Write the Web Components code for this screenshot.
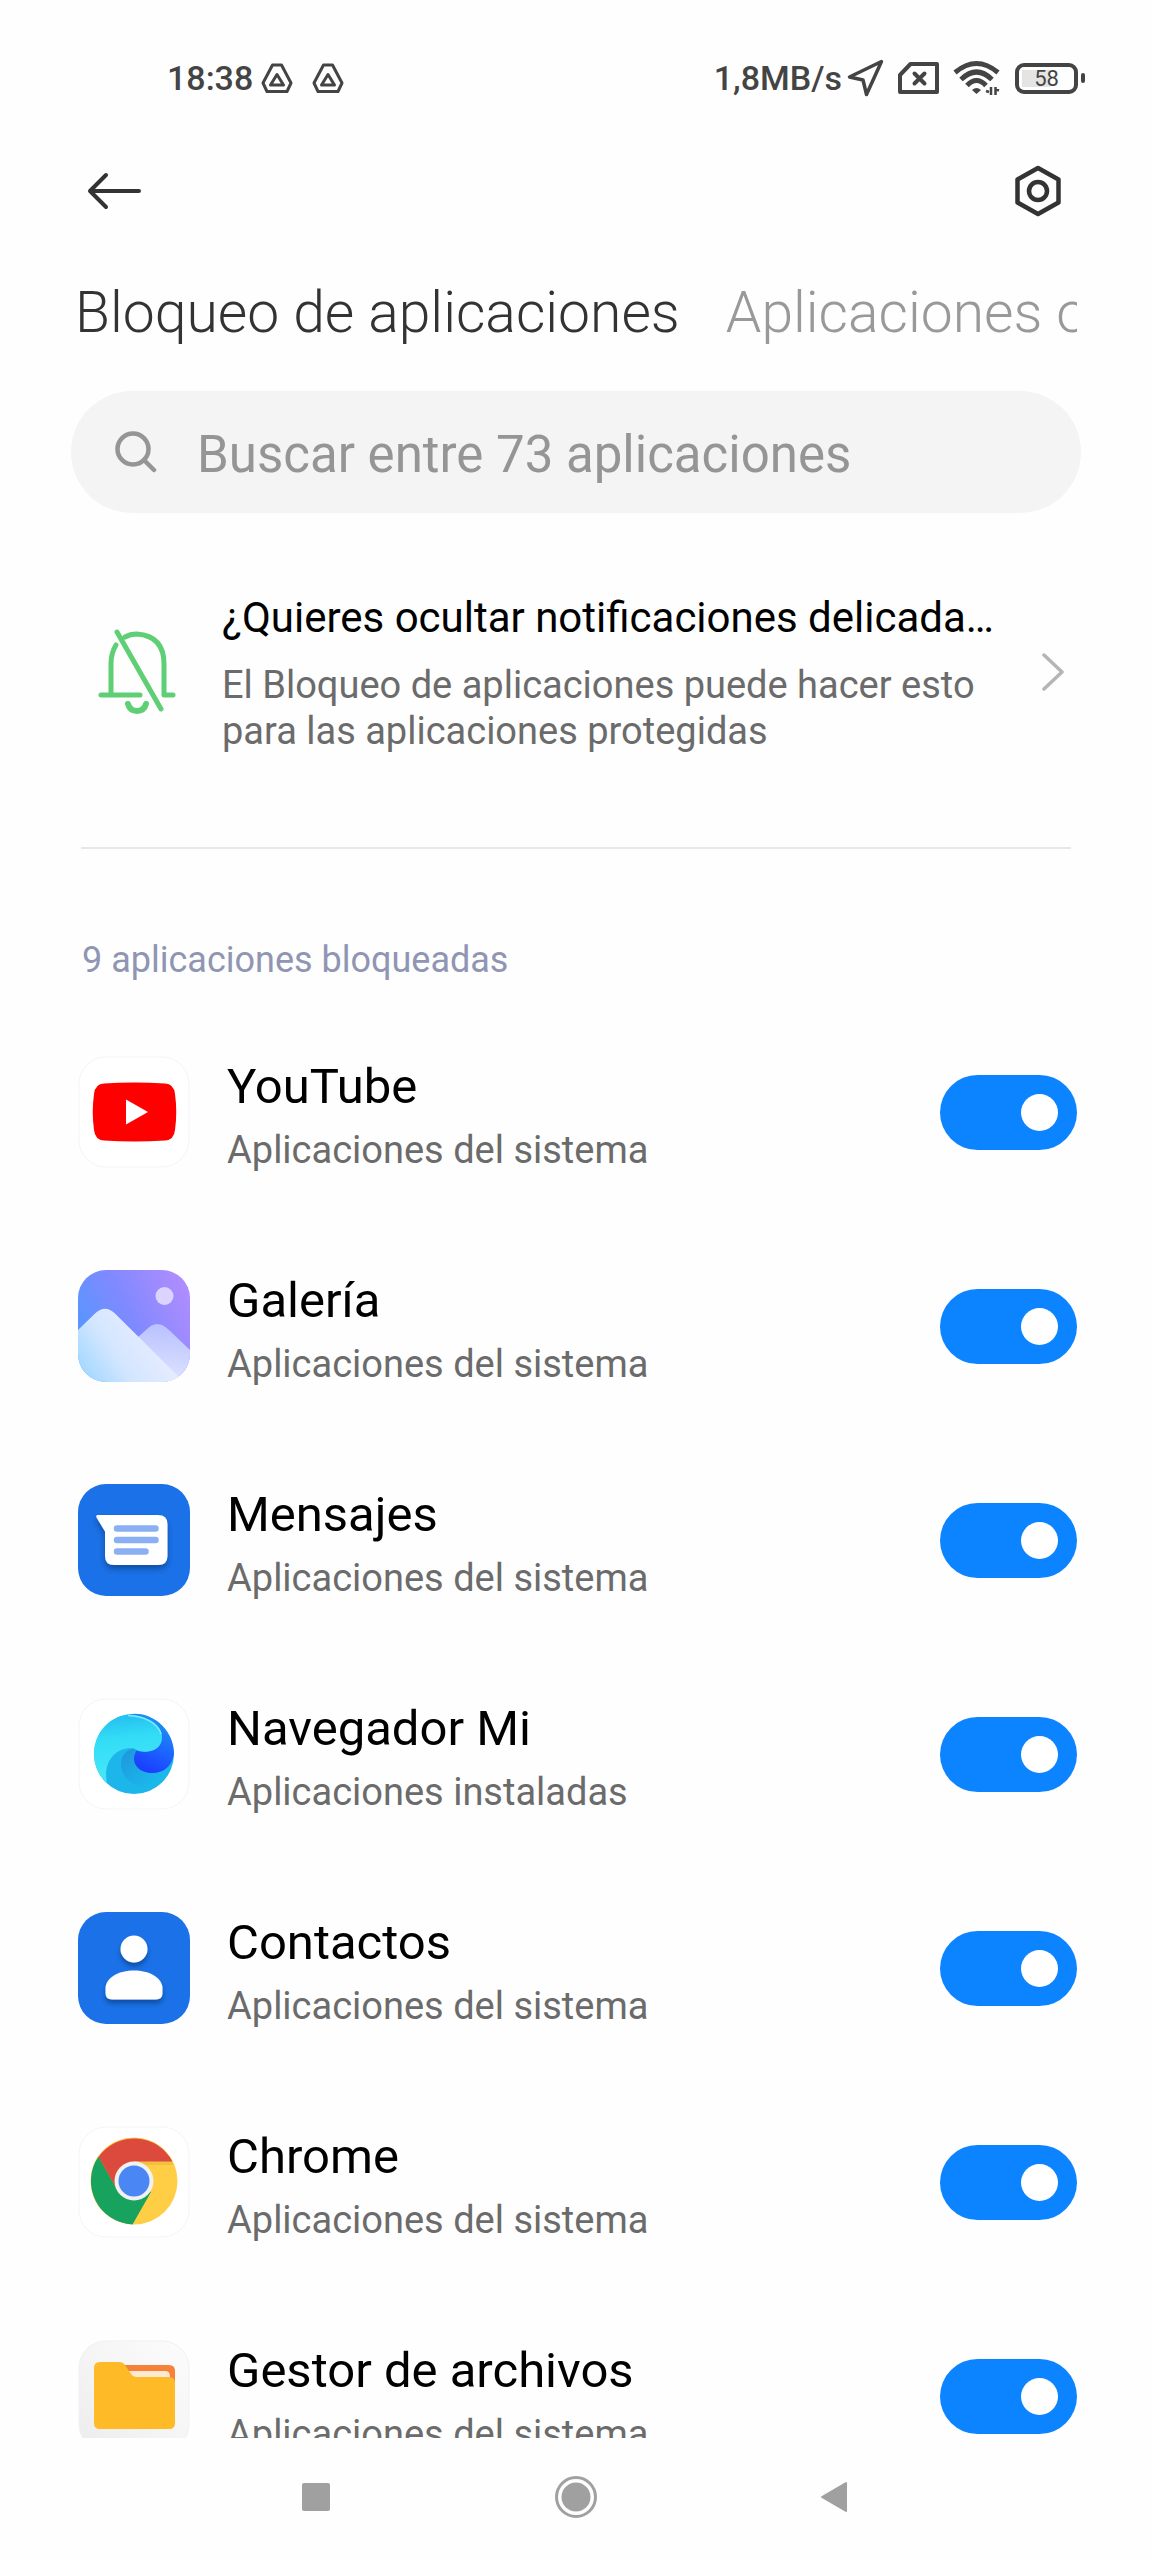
<!DOCTYPE html>
<html lang="es">
<head>
<meta charset="utf-8">
<meta name="viewport" content="width=device-width, initial-scale=1">
<title>Bloqueo de aplicaciones</title>
<style>
  body {
    margin: 0;
    background: #fefefe;
    font-family: Roboto, "Noto Sans", sans-serif;
  }
</style>
</head>
<body>

<lock-screen>
  <status-bar slot="top" time="18:38" speed="1,8MB/s" battery="58"></status-bar>
  <action-bar slot="top"></action-bar>
  <page-tabs slot="top">
    <tab-item active>Bloqueo de aplicaciones</tab-item>
    <tab-item>Aplicaciones ocultas</tab-item>
  </page-tabs>

  <app-search placeholder="Buscar entre 73 aplicaciones"></app-search>
  <notice-card>
    <span slot="title">¿Quieres ocultar notificaciones delicadas?</span>
    El Bloqueo de aplicaciones puede hacer esto para las aplicaciones protegidas
  </notice-card>
  <list-heading>9 aplicaciones bloqueadas</list-heading>
  <app-row icon="youtube" kind="Aplicaciones del sistema">YouTube</app-row>
  <app-row icon="gallery" kind="Aplicaciones del sistema">Galería</app-row>
  <app-row icon="messages" kind="Aplicaciones del sistema">Mensajes</app-row>
  <app-row icon="browser" kind="Aplicaciones instaladas">Navegador Mi</app-row>
  <app-row icon="contacts" kind="Aplicaciones del sistema">Contactos</app-row>
  <app-row icon="chrome" kind="Aplicaciones del sistema">Chrome</app-row>
  <app-row icon="files" kind="Aplicaciones del sistema">Gestor de archivos</app-row>

  <nav-bar slot="bottom"></nav-bar>
</lock-screen>

<script>
/**
 * Creates a template element from markup.
 */
const html = (markup) => {
  const template = document.createElement('template')
  template.innerHTML = markup
  return template
}

/**
 * Base class, clones the template of the subclass into an open shadow root.
 */
class BaseElement extends HTMLElement {
  constructor () {
    super()
    this.attachShadow({ mode: 'open' })
    this.shadowRoot.appendChild(this.constructor.template.content.cloneNode(true))
  }
}

const appIcons = {
  youtube: `
    <rect x="1" y="1" width="110" height="110" rx="27" fill="#fff" stroke="#f5f5f5"/>
    <path d="M26 27.500Q56 25.500 87 27.500Q96 28 97 38Q99.500 56 97 74Q96 84 87 84.500Q56 86.500 26 84.500Q17 84 16 74Q13.500 56 16 38Q17 28 26 27.500Z" fill="#f00"/>
    <path d="M48 43.500V68.500L70 56Z" fill="#fff"/>`,
  gallery: `
    <defs>
      <linearGradient id="sky" x1="0" y1=".6" x2="1" y2=".1"><stop stop-color="#5497ff"/><stop offset=".45" stop-color="#8089ff"/><stop offset="1" stop-color="#b48dff"/></linearGradient>
      <linearGradient id="near" x1="0" y1=".9" x2=".8" y2=".5"><stop stop-color="#9dd6ff"/><stop offset=".5" stop-color="#d3e6ff"/><stop offset="1" stop-color="#e6ecff"/></linearGradient>
      <linearGradient id="far" x1=".5" y1="0" x2=".4" y2="1"><stop stop-color="#b9c1ff"/><stop offset="1" stop-color="#dfe5ff"/></linearGradient>
      <clipPath id="box"><rect width="112" height="112" rx="28"/></clipPath>
    </defs>
    <g clip-path="url(#box)">
      <path d="M0 0H112V112H0Z" fill="url(#sky)"/>
      <path d="M50 76L68 60Q79 48 91 60L112 80V112H60Z" fill="url(#far)"/>
      <path d="M0 60L16 44.500Q27 33 38 44.500L102 108V112H0Z" fill="url(#near)"/>
      <circle cx="86.500" cy="26" r="9" fill="#dcd3ff"/>
    </g>`,
  messages: `
    <defs><filter id="shade" x="-20%" y="-20%" width="150%" height="160%"><feDropShadow dx="0" dy="4" stdDeviation="3" flood-color="#06285f" flood-opacity=".5"/></filter></defs>
    <rect width="112" height="112" rx="28" fill="#1b72e8"/>
    <path d="M20 31H80Q89.500 31 89.500 40V72Q89.500 81 80 81H36Q27 81 27 72V47.500L18.500 33.500Q17.500 31 20 31Z" fill="#fff" filter="url(#shade)"/>
    <path d="M39 44.500H77.500M39 56H77.500M39 67.500H67.500" stroke="#8aaff3" stroke-width="6.500" stroke-linecap="round"/>`,
  browser: `
    <defs>
      <linearGradient id="cyan" x1=".2" y1="0" x2=".3" y2="1"><stop stop-color="#22bdf0"/><stop offset=".35" stop-color="#33dcf6"/><stop offset="1" stop-color="#46e9f8"/></linearGradient>
      <linearGradient id="blue" x1=".8" y1="0" x2=".4" y2="1"><stop stop-color="#1e9df2"/><stop offset=".6" stop-color="#1c61ff"/><stop offset="1" stop-color="#1b3bff"/></linearGradient>
      <linearGradient id="deep" x1="0" y1="0" x2="1" y2="1"><stop stop-color="#1f86d6"/><stop offset="1" stop-color="#18c6f1"/></linearGradient>
    </defs>
    <rect x="1" y="1" width="110" height="110" rx="27" fill="#fff" stroke="#f5f5f5"/>
    <circle cx="56" cy="56" r="40" fill="#1db6ea"/>
    <path d="M58 50Q43 52 43 67Q44 82 60 88Q78 90 90 76L74 75Z" fill="url(#deep)" opacity=".7"/>
    <path d="M50 16.500C74 12 96 32 96 56C94 68 86 75 74 75C63 75 56 68 56 61C56 57 57 55 59 52C72 57 84 50 84 39C84 26 68 17 50 16.500Z" fill="url(#blue)"/>
    <path d="M29 85C24 62 40 48 56 50.500C62 56 84 56 84 39C84 26 68 17 50 16.500C30 19 16 36 16 56C16 67 21 78 29 85Z" fill="url(#cyan)"/>
    <path d="M50 17.500C66 18 80 25 83 36" fill="none" stroke="#7deafd" stroke-width="1.500"/>`,
  contacts: `
    <defs><filter id="shade" x="-20%" y="-20%" width="150%" height="160%"><feDropShadow dx="0" dy="4" stdDeviation="2.500" flood-color="#06285f" flood-opacity=".5"/></filter></defs>
    <rect width="112" height="112" rx="28" fill="#1b72e8"/>
    <g fill="#fff" filter="url(#shade)">
      <circle cx="56" cy="37" r="13.500"/>
      <path d="M27.500 75C29 65 41 58.500 56 58.500S83 65 84.500 75V81Q84.500 87.500 78 87.500H34Q27.500 87.500 27.500 81Z"/>
    </g>`,
  chrome: `
    <rect x="1" y="1" width="110" height="110" rx="27" fill="#fff" stroke="#f5f5f5"/>
    <circle cx="56" cy="55" r="43.500" fill="#ffce44"/>
    <path d="M68 39H95.500L93.500 35H60Z" fill="#e8b03a" opacity=".5"/>
    <path d="M20.500 30.500A43.500 43.500 0 0 0 54.500 98.500L73 66L56 55L40 65Z" fill="#17a25d"/>
    <path d="M20.500 31A43.500 43.500 0 0 1 94.500 35.500H56L38 62L36.500 59Z" fill="#dc4a3e"/>
    <circle cx="56" cy="55" r="19.500" fill="#f1f1f1"/>
    <circle cx="56" cy="55" r="15.500" fill="#4a87f4"/>`,
  files: `
    <defs>
      <linearGradient id="paper" x1="0" y1="1" x2="1" y2="0"><stop stop-color="#ececec"/><stop offset=".5" stop-color="#f5f5f5"/><stop offset="1" stop-color="#fcfcfc"/></linearGradient>
    </defs>
    <rect x="1" y="1" width="110" height="110" rx="27" fill="url(#paper)" stroke="#f1f1f1"/>
    <path d="M45 25H91Q97 25 97 31V44H45Z" fill="#f88138"/>
    <path d="M50 31H88Q92 31 92 37H50Z" fill="#fde9d0"/>
    <path d="M22 22H42Q45 22 47 25L53 34Q55 37 59 37H91Q97 37 97 43V83Q97 89 91 89H22Q16 89 16 83V28Q16 22 22 22Z" fill="#ffba28"/>`
}

customElements.define('lock-screen',
/**
 * Page frame: fixed header and footer, the list between them is clipped.
 */
  class extends BaseElement {
    static template = html(`
      <style>
        :host {
          display: flex;
          flex-direction: column;
          height: 100vh;
        }
        main {
          flex: 1;
          min-height: 0;
          overflow: hidden;
        }
      </style>
      <header><slot name="top"></slot></header>
      <main><slot></slot></main>
      <slot name="bottom"></slot>`)
  })

customElements.define('drive-icon',
  class extends BaseElement {
    static template = html(`
      <style>
        :host { display: flex; }
      </style>
      <svg width="32" height="30" fill="none" stroke="#444" stroke-width="3" stroke-linejoin="round">
        <path d="M11.500 2H20.500L30 20L26 28.500H6L2 20Z"/>
        <path d="M16 11.500L22.500 22H9.500Z"/>
      </svg>`)
  })

customElements.define('status-bar',
/**
 * Phone status bar with clock, network speed and battery.
 */
  class extends BaseElement {
    static template = html(`
      <style>
        :host {
          display: flex;
          align-items: center;
          justify-content: space-between;
          height: 72px;
          padding: 42px 67px 0 167px;
          color: #444;
          font-size: 34px;
          font-weight: 500;
          line-height: 40px;
        }
        div {
          display: flex;
          align-items: center;
        }
        .left { gap: 19px; }
        .time { margin-right: -11px; }
        .right { gap: 14px; }
        .speed { margin-right: -9px; }
        .battery {
          display: flex;
          align-items: center;
        }
        .level {
          box-sizing: border-box;
          width: 63px;
          height: 31px;
          border: 4px solid #444;
          border-radius: 9px;
          background: linear-gradient(#e4e4e4, #e4e4e4) 3px center / 28px 17px no-repeat;
          font-size: 22px;
          font-weight: 400;
          line-height: 24px;
          text-align: center;
        }
        .battery::after {
          content: "";
          width: 4px;
          height: 10px;
          margin-left: 3px;
          border-radius: 2px;
          background: #444;
        }
      </style>
      <div class="left">
        <span class="time"></span>
        <drive-icon></drive-icon>
        <drive-icon></drive-icon>
      </div>
      <div class="right">
        <span class="speed"></span>
        <svg width="37" height="38" fill="none" stroke="#444" stroke-width="3.500" stroke-linejoin="round"><path d="M34.500 2.500L2.500 18L16 21L19.500 35.500Z"/></svg>
        <svg width="41" height="32" fill="none" stroke="#444" stroke-width="4" stroke-linejoin="round"><path d="M12.500 2H39V30H2V13Z"/><path d="M16.500 11.500L26.500 21.500M26.500 11.500L16.500 21.500" stroke-linecap="round"/></svg>
        <svg width="48" height="36" fill="none" stroke="#444" stroke-width="5">
          <path d="M2 12.500Q23.500 -5.500 45 12.500M8 19.500Q23.500 4.500 39 19.500M14 25.500Q23.500 15.500 33 25.500"/>
          <path d="M19 30Q23.500 26 28 30L23.500 34Z" fill="#444" stroke="none"/>
          <path d="M38 27V35M36 32L33 31M42.500 35V27M42 29L46 30.500" stroke-width="2.500"/>
        </svg>
        <span class="battery"><span class="level"></span></span>
      </div>`)

    connectedCallback () {
      this.shadowRoot.querySelector('.time').textContent = this.getAttribute('time')
      this.shadowRoot.querySelector('.speed').textContent = this.getAttribute('speed')
      this.shadowRoot.querySelector('.level').textContent = this.getAttribute('battery')
    }
  })

customElements.define('action-bar',
  class extends BaseElement {
    static template = html(`
      <style>
        :host {
          display: flex;
          align-items: center;
          justify-content: space-between;
          height: 154px;
          padding: 0 90px 0 87px;
        }
        button {
          display: flex;
          padding: 0;
          border: 0;
          background: none;
        }
      </style>
      <button aria-label="Atrás">
        <svg width="55" height="38" fill="none" stroke="#333" stroke-width="4" stroke-linecap="round" stroke-linejoin="round"><path d="M52 19H3M19 3L3 19L19 35"/></svg>
      </button>
      <button aria-label="Ajustes">
        <svg width="48" height="52" fill="none" stroke="#333" stroke-width="4.500" stroke-linejoin="round"><path d="M24 3L44.500 14.500V37.500L24 49L3.500 37.500V14.500Z"/><circle cx="24" cy="26" r="9"/></svg>
      </button>`)
  })

customElements.define('page-tabs',
  class extends BaseElement {
    static template = html(`
      <style>
        :host { display: block; }
        nav {
          display: flex;
          gap: 46px;
          height: 123px;
          margin: 0 75px;
          overflow: hidden;
          white-space: nowrap;
        }
      </style>
      <nav><slot></slot></nav>`)
  })

customElements.define('tab-item',
  class extends BaseElement {
    static template = html(`
      <style>
        :host {
          flex: none;
          font-size: 57px;
          font-weight: 300;
          line-height: 90px;
        }
        a {
          color: #999;
          text-decoration: none;
        }
        :host([active]) a { color: #333; }
      </style>
      <a href="#"><slot></slot></a>`)
  })

customElements.define('app-search',
/**
 * Search field.
 */
  class extends BaseElement {
    static template = html(`
      <style>
        :host {
          display: flex;
          align-items: center;
          gap: 40px;
          height: 122px;
          margin: 0 71px;
          padding: 0 44px;
          box-sizing: border-box;
          border-radius: 61px;
          background: #f4f4f4;
        }
        svg { flex: none; }
        input {
          flex: 1;
          min-width: 0;
          padding: 6px 0 0;
          border: 0;
          outline: 0;
          background: none;
          font: 400 51px/64px Roboto, sans-serif;
        }
        input::placeholder {
          color: #959595;
          opacity: 1;
        }
      </style>
      <svg width="42" height="42" fill="none" stroke="#959595" stroke-width="4.500" stroke-linecap="round"><circle cx="18" cy="18" r="15.500"/><path d="M29 29L39 39"/></svg>
      <input type="search">`)

    connectedCallback () {
      const input = this.shadowRoot.querySelector('input')
      input.placeholder = this.getAttribute('placeholder')
      input.setAttribute('aria-label', input.placeholder)
    }
  })

customElements.define('notice-card',
  class extends BaseElement {
    static template = html(`
      <style>
        :host { display: block; }
        a {
          display: flex;
          align-items: center;
          margin: 0 87px 0 98px;
          padding: 77px 0 93px;
          color: inherit;
          text-decoration: none;
        }
        svg { flex: none; }
        .text {
          flex: 1;
          min-width: 0;
          margin: 0 42px 0 46px;
        }
        .title {
          overflow: hidden;
          color: #000;
          font-size: 42px;
          line-height: 56px;
          text-overflow: ellipsis;
          white-space: nowrap;
        }
        .desc {
          margin-top: 16px;
          color: #6b6b6b;
          font-size: 38px;
          line-height: 46px;
        }
        hr {
          height: 2px;
          margin: 0 81px;
          border: 0;
          background: #e7e7e7;
        }
      </style>
      <a href="#">
        <svg width="78" height="86" fill="none" stroke="#5ecf74" stroke-width="5" stroke-linecap="round"><path d="M19 3L63 80M3 66H42M67 66H75M13 66V35Q13 24 18 16M27 8Q32 5 39 5Q66 7 66 35V66"/><path d="M30 75Q32 82 39 82T48 75" stroke-width="6"/></svg>
        <div class="text">
          <div class="title"><slot name="title"></slot></div>
          <div class="desc"><slot></slot></div>
        </div>
        <svg width="23" height="38" fill="none" stroke="#b5b5b5" stroke-width="3.500" stroke-linecap="round" stroke-linejoin="round"><path d="M2 2L20 19L2 36"/></svg>
      </a>
      <hr>`)
  })

customElements.define('list-heading',
  class extends BaseElement {
    static template = html(`
      <style>
        :host { display: block; }
        h2 {
          margin: 88px 82px 22px;
          color: #8f95b2;
          font-size: 36px;
          font-weight: 400;
          line-height: 46px;
        }
      </style>
      <h2><slot></slot></h2>`)
  })

customElements.define('app-row',
/**
 * One application with its lock switch.
 */
  class extends BaseElement {
    static template = html(`
      <style>
        :host {
          display: flex;
          align-items: center;
          height: 214px;
          padding: 0 75px 0 78px;
        }
        svg { flex: none; }
        .text {
          flex: 1;
          margin-left: 37px;
          padding-top: 14px;
        }
        label {
          display: block;
          color: #000;
          font-size: 49px;
          line-height: 62px;
        }
        .kind {
          color: #6b6b6b;
          font-size: 38px;
          line-height: 64px;
        }
        input {
          display: flex;
          align-items: center;
          box-sizing: border-box;
          width: 137px;
          height: 75px;
          margin: 0;
          padding: 0 19px;
          border-radius: 38px;
          background: #ddd;
          appearance: none;
        }
        input::before {
          content: "";
          width: 37px;
          height: 37px;
          border-radius: 50%;
          background: #fff;
        }
        input:checked {
          justify-content: flex-end;
          background: #0d84ff;
        }
      </style>
      <svg width="112" height="112" viewBox="0 0 112 112"></svg>
      <div class="text">
        <label for="lock"><slot></slot></label>
        <div class="kind"></div>
      </div>
      <input type="checkbox" id="lock" role="switch" checked>`)

    connectedCallback () {
      this.shadowRoot.querySelector('svg').innerHTML = appIcons[this.getAttribute('icon')]
      this.shadowRoot.querySelector('.kind').textContent = this.getAttribute('kind')
    }
  })

customElements.define('nav-bar',
/**
 * System navigation buttons.
 */
  class extends BaseElement {
    static template = html(`
      <style>
        :host {
          display: grid;
          grid-template-columns: repeat(3, 260px);
          justify-content: center;
          height: 122px;
          padding-bottom: 4px;
          box-sizing: border-box;
        }
        button {
          display: flex;
          align-items: center;
          justify-content: center;
          padding: 0;
          border: 0;
          background: none;
        }
      </style>
      <button aria-label="Recientes"><svg width="28" height="28"><rect width="28" height="28" rx="2" fill="#a0a0a0"/></svg></button>
      <button aria-label="Inicio"><svg width="42" height="42"><circle cx="21" cy="21" r="19.500" fill="none" stroke="#a0a0a0" stroke-width="3"/><circle cx="21" cy="21" r="14.500" fill="#a0a0a0"/></svg></button>
      <button aria-label="Volver"><svg width="32" height="32"><path d="M26 2V30L2 16Z" fill="#a0a0a0" stroke="#a0a0a0" stroke-width="2" stroke-linejoin="round"/></svg></button>`)
  })
</script>
</body>
</html>
